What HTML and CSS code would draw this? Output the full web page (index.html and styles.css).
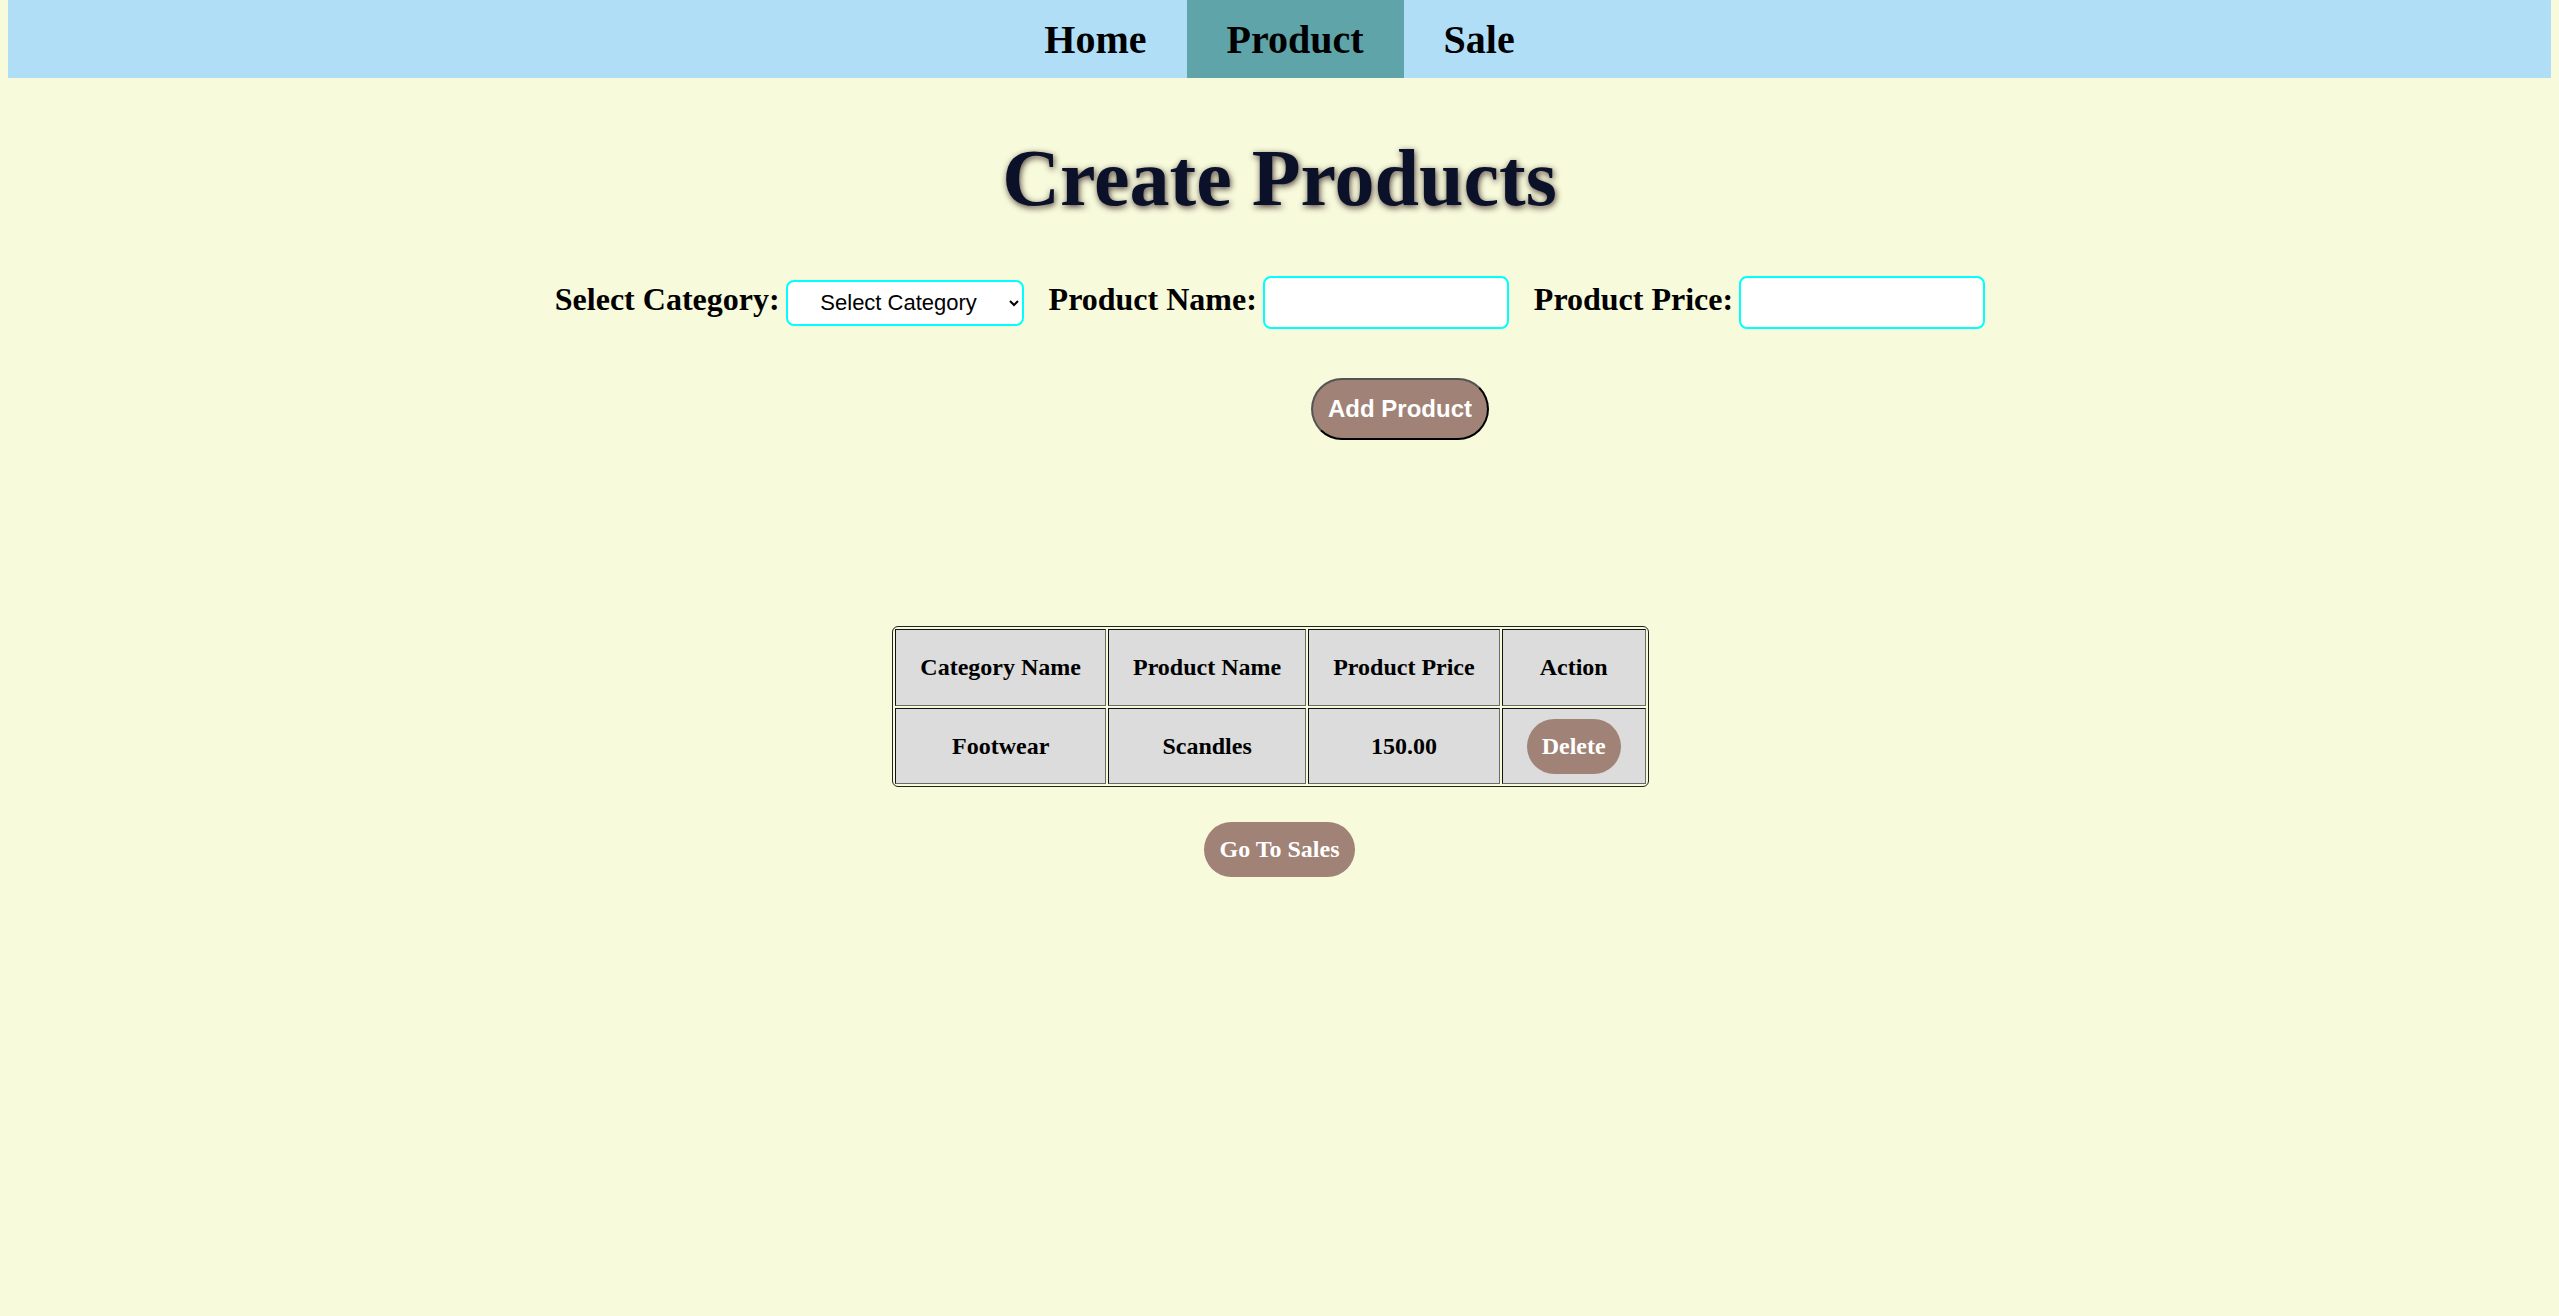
FILE: index.html
```html
<!DOCTYPE html>
<html lang="en">
<head>
<meta charset="utf-8">
<title>Create Products</title>
<link rel="stylesheet" href="styles.css">
</head>
<body>
<nav class="nav">
  <a class="nav-link" href="#">Home</a>
  <a class="nav-link active" href="#">Product</a>
  <a class="nav-link" href="#">Sale</a>
</nav>

<h1 class="title">Create Products</h1>

<form class="form-row">
  <div class="field">
    <label class="field-label" for="cat">Select Category:</label>
    <select id="cat" class="select">
      <option>Select Category</option>
    </select>
  </div>
  <div class="field">
    <label class="field-label" for="pname">Product Name:</label>
    <input id="pname" class="text-input" type="text">
  </div>
  <div class="field">
    <label class="field-label" for="pprice">Product Price:</label>
    <input id="pprice" class="text-input" type="text">
  </div>
</form>

<div class="add-row">
  <button class="add-btn" type="button">Add Product</button>
</div>

<div class="table-wrap">
  <table class="products">
    <thead>
      <tr>
        <th>Category Name</th>
        <th>Product Name</th>
        <th>Product Price</th>
        <th>Action</th>
      </tr>
    </thead>
    <tbody>
      <tr>
        <td>Footwear</td>
        <td>Scandles</td>
        <td>150.00</td>
        <td><button class="pill-btn" type="button">Delete</button></td>
      </tr>
    </tbody>
  </table>
</div>

<div class="sales-row">
  <button class="pill-btn" type="button">Go To Sales</button>
</div>
</body>
</html>
```

FILE: styles.css
```css
html {
  background: #f7fadb;
}

body {
  margin: 0 8px;
  background: #f7fadb;
  font-family: "Liberation Serif", "Times New Roman", serif;
  color: #000;
}

.nav {
  display: flex;
  justify-content: center;
  height: 78px;
  background: #b0def6;
}

.nav-link {
  display: flex;
  align-items: center;
  padding: 0 40px;
  font-size: 40px;
  font-weight: bold;
  color: #000;
  text-decoration: none;
}

.nav-link.active {
  background: #5ea4a9;
}

.title {
  margin: 54px 0 0;
  text-align: center;
  font-size: 80px;
  line-height: 92px;
  font-weight: bold;
  color: #0b1129;
  text-shadow: 1px 2px 6px rgba(50, 30, 30, 0.85);
}

.form-row {
  display: flex;
  justify-content: center;
  align-items: center;
  gap: 25px;
  margin: 52px 0 0;
  padding-right: 19px;
}

.field {
  display: flex;
  align-items: center;
  gap: 6px;
}

.field-label {
  margin-bottom: 6px;
  font-size: 32px;
  font-weight: bold;
  white-space: nowrap;
}

.select {
  box-sizing: border-box;
  width: 238px;
  height: 46px;
  border: 2px solid #00ffff;
  border-radius: 8px;
  background: #fff;
  font-family: "Liberation Sans", Arial, sans-serif;
  font-size: 22px;
  color: #000;
  text-align: center;
  padding: 0 4px;
}

.text-input {
  box-sizing: border-box;
  width: 246px;
  height: 53px;
  border: 2px solid #00ffff;
  border-radius: 8px;
  background: #fff;
  font-size: 22px;
  padding: 0 8px;
}

.add-row {
  margin-top: 49px;
  text-align: center;
}

.add-btn {
  margin-left: 241px;
  padding: 15px;
  border: 2px outset #000;
  border-radius: 32px;
  background: #a08276;
  color: #fff;
  font-family: "Liberation Sans", Arial, sans-serif;
  font-size: 24px;
  font-weight: bold;
  line-height: normal;
}

.table-wrap {
  display: flex;
  justify-content: center;
  margin-top: 186px;
  padding-right: 18px;
}

.products {
  border: 1px solid #222;
  border-radius: 6px;
  border-spacing: 2px;
}

.products th,
.products td {
  height: 75px;
  padding: 0 24px;
  background: #dcdcdc;
  border: 1px solid;
  border-color: #111 #6a6a6a #6a6a6a #111;
  font-size: 24px;
  font-weight: bold;
  text-align: center;
  white-space: nowrap;
}

.products td {
  height: 74px;
}

.pill-btn {
  padding: 14px 15px;
  border: none;
  border-radius: 30px;
  background: #a08276;
  color: #fff;
  font-family: "Liberation Serif", "Times New Roman", serif;
  font-size: 24px;
  font-weight: bold;
  line-height: normal;
}

.sales-row {
  margin-top: 35px;
  text-align: center;
}
```
